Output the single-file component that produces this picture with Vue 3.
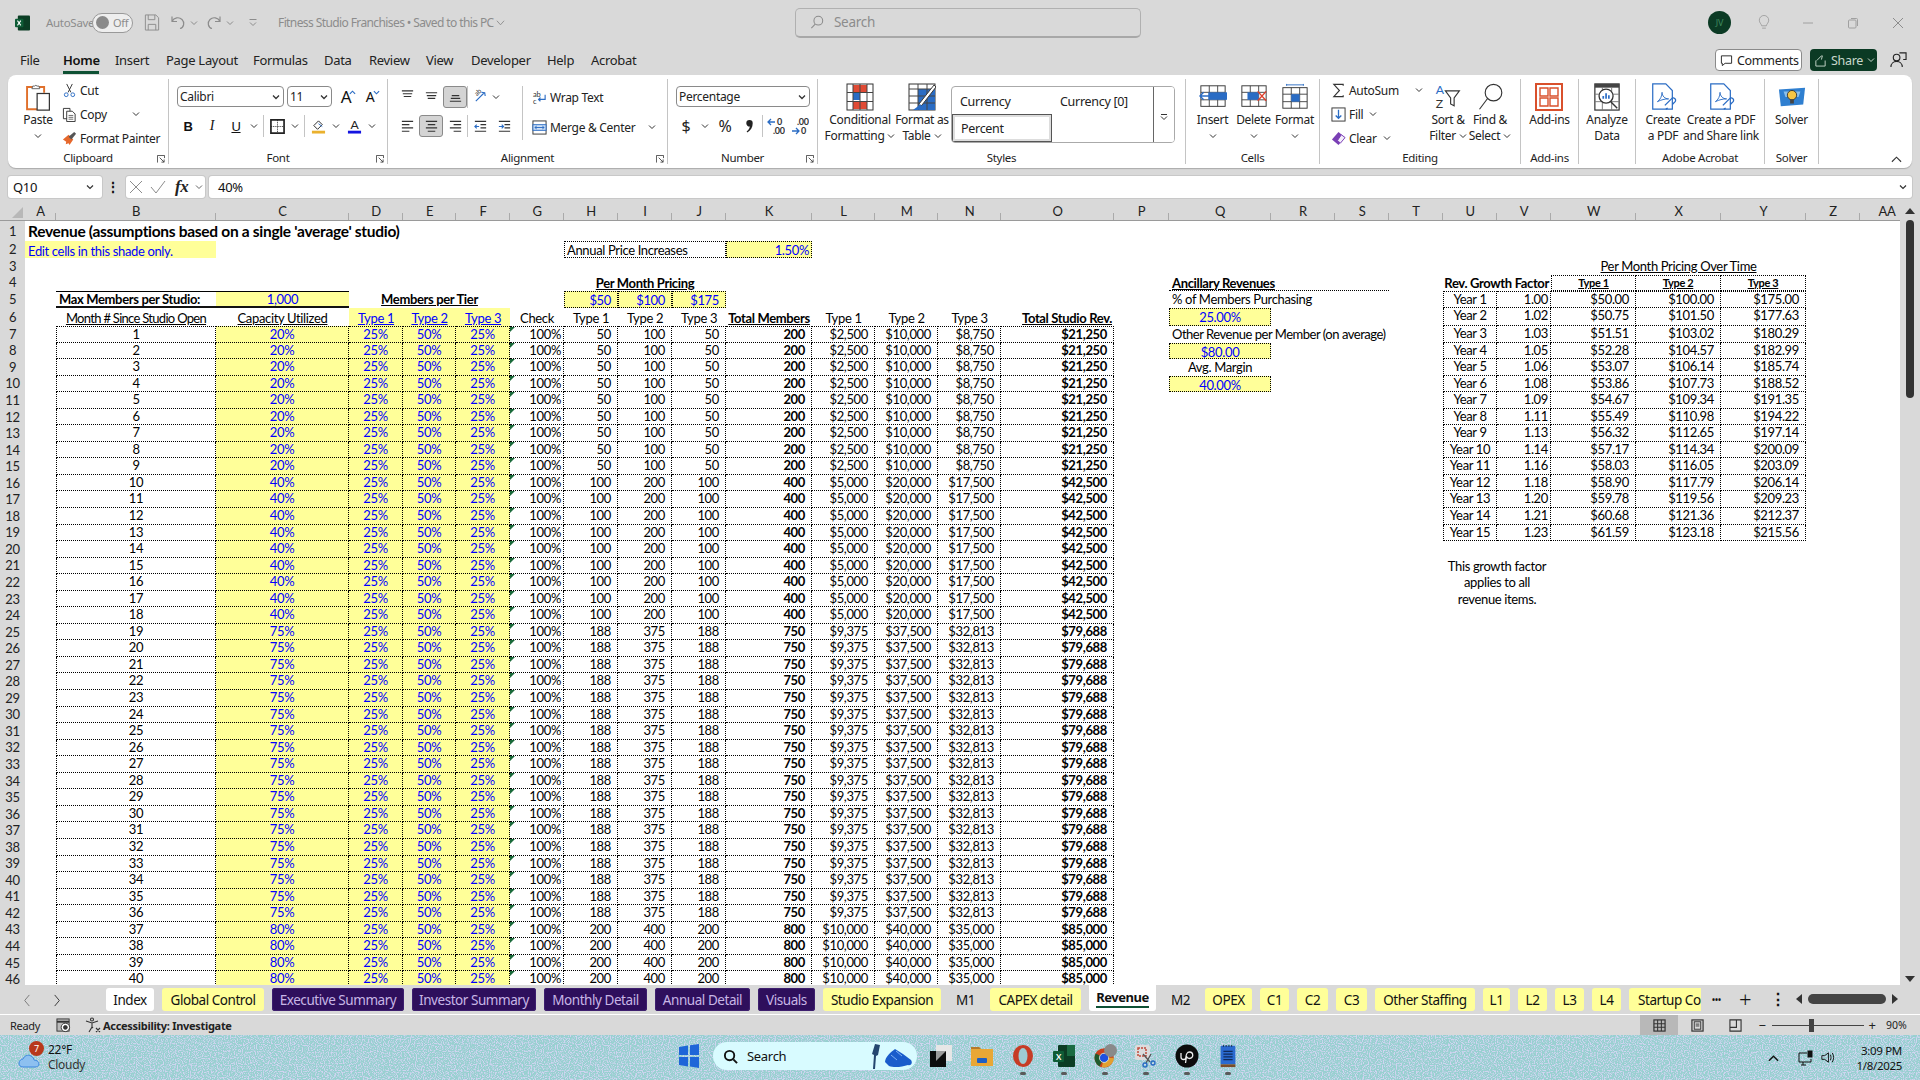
<script setup>
// columnas de la hoja: letra y ancho en px
const colWidths = {
  A: 31, B: 160, C: 133, D: 54, E: 53, F: 54, G: 54, H: 54, I: 54, J: 54, K: 86, L: 63, M: 63, N: 63,
  O: 113, P: 55, Q: 102, R: 64, S: 54, T: 54, U: 54, V: 54, W: 85, X: 85, Y: 85, Z: 54, AA: 54,
};
const letters = Object.keys(colWidths);
const rowCount = 46;

const gridStyle = {
  gridTemplateColumns: "25px " + letters.map((l) => colWidths[l] + "px").join(" "),
  gridTemplateRows:
    "21px 20px 17px 16.5px 16.5px 17px 18px " + Array(40).fill("16.55px").join(" "),
};

const cells = [];
const add = (row, col, text, cls = "", span = 1) => {
  cells.push({
    key: col + row,
    text,
    cls,
    pos: {
      gridRow: row + 1,
      gridColumn: letters.indexOf(col) + 2 + " / span " + span,
    },
  });
};

const fmt = (n) => n.toLocaleString("en-US");

// cabecera
add(1, "A", "Revenue (assumptions based on a single 'average' studio)", "title", 12);
add(2, "A", "Edit cells in this shade only.", "yel blue pl3 pt1", 2);
add(2, "H", "Annual Price Increases", "box l", 3);
add(2, "K", "1.50%", "box yel blue r3");
add(4, "H", "Per Month Pricing", "bold ul ctr", 3);
add(5, "B", "Max Members per Studio:", "bold mm l pl3");
add(5, "C", "1,000", "yel blue ctr mm");
add(5, "D", "Members per Tier", "bold ul ctr", 3);
["$50", "$100", "$175"].forEach((t, i) => add(5, "HIJ"[i], t, "box yel blue r"));

add(6, "B", "Month # Since Studio Open", "ul ctr pt1 tight");
add(6, "C", "Capacity Utilized", "ul ctr pt1");
["D", "E", "F"].forEach((c, i) => add(6, c, "Type " + (i + 1), "yel blue ul ctr pt1"));
add(6, "G", "Check", "ctr pt1");
["H", "I", "J"].forEach((c, i) => add(6, c, "Type " + (i + 1), "ctr pt1"));
add(6, "K", "Total Members", "bold ul ctr pt1");
["L", "M", "N"].forEach((c, i) => add(6, c, "Type " + (i + 1), "ctr pt1"));
add(6, "O", "Total Studio Rev.", "bold ul r3 pt1");

// filas de datos: mes 1 en la fila 7
const capacity = (m) => (m <= 9 ? 20 : m <= 18 ? 40 : m <= 36 ? 75 : 80);
for (let m = 1; m <= 40; m++) {
  const r = m + 6;
  const cap = capacity(m);
  const total = cap * 10;
  const t1 = Math.round(total * 0.25);
  const t2 = total * 0.5;
  const top = r === 7 ? " bt" : "";
  add(r, "B", m, "b bl ctr" + top);
  add(r, "C", cap + "%", "b yel blue ctr" + top);
  add(r, "D", "25%", "b yel blue ctr" + top);
  add(r, "E", "50%", "b yel blue ctr" + top);
  add(r, "F", "25%", "b yel blue ctr" + top);
  add(r, "G", "100%", "b r3 tri" + top);
  add(r, "H", t1, "b r" + top);
  add(r, "I", t2, "b r" + top);
  add(r, "J", t1, "b r" + top);
  add(r, "K", total, "b r bold" + top);
  add(r, "L", "$" + fmt(total * 12.5), "b r" + top);
  add(r, "M", "$" + fmt(total * 50), "b r" + top);
  add(r, "N", "$" + fmt(Math.round(total * 43.75)), "b r" + top);
  add(r, "O", "$" + fmt(Math.round(total * 106.25)), "b r bold" + top);
}

// ingresos auxiliares
add(4, "Q", "Ancillary Revenues", "bold ul l pl3 dotb", 3);
add(5, "Q", "% of Members Purchasing", "l pl3", 3);
add(6, "Q", "25.00%", "box yel blue ctr");
add(7, "Q", "Other Revenue per Member (on average)", "l pl3 tight2", 3);
add(8, "Q", "$80.00", "box yel blue ctr");
add(9, "Q", "Avg. Margin", "ctr");
add(10, "Q", "40.00%", "box yel blue ctr");

// tabla de precios por año
const factors = ["1.00", "1.02", "1.03", "1.05", "1.06", "1.08", "1.09", "1.11", "1.13", "1.14", "1.16", "1.18", "1.20", "1.21", "1.23"];
const type1 = ["50.00", "50.75", "51.51", "52.28", "53.07", "53.86", "54.67", "55.49", "56.32", "57.17", "58.03", "58.90", "59.78", "60.68", "61.59"];
const type2 = ["100.00", "101.50", "103.02", "104.57", "106.14", "107.73", "109.34", "110.98", "112.65", "114.34", "116.05", "117.79", "119.56", "121.36", "123.18"];
const type3 = ["175.00", "177.63", "180.29", "182.99", "185.74", "188.52", "191.35", "194.22", "197.14", "200.09", "203.09", "206.14", "209.23", "212.37", "215.56"];

add(3, "W", "Per Month Pricing Over Time", "ul ctr", 3);
add(4, "U", "Rev. Growth Factor", "bold r3", 2);
["W", "X", "Y"].forEach((c, i) => add(4, c, "Type " + (i + 1), "small bold ul ctr b bt" + (i === 0 ? " bl" : "")));
factors.forEach((f, i) => {
  const r = i + 5;
  const top = i === 0 ? " bt" : "";
  add(r, "U", "Year " + (i + 1), "b bl ctr" + top);
  add(r, "V", f, "b r2" + top);
  add(r, "W", "$" + type1[i], "b r" + top);
  add(r, "X", "$" + type2[i], "b r" + top);
  add(r, "Y", "$" + type3[i], "b r" + top);
});
add(21, "U", "This growth factor", "ctr", 2);
add(22, "U", "applies to all", "ctr", 2);
add(23, "U", "revenue items.", "ctr", 2);

const rowNumbers = Array.from({ length: rowCount }, (_, i) => i + 1);

const menus = [
  { t: "File", w: 43 },
  { t: "Home", w: 52, on: true },
  { t: "Insert", w: 51 },
  { t: "Page Layout", w: 87 },
  { t: "Formulas", w: 71 },
  { t: "Data", w: 45 },
  { t: "Review", w: 57 },
  { t: "View", w: 45 },
  { t: "Developer", w: 76 },
  { t: "Help", w: 44 },
  { t: "Acrobat", w: 50 },
];

const tabs = [
  { t: "Index", w: 48, k: "white" },
  { t: "Global Control", w: 102, k: "yellow" },
  { t: "Executive Summary", w: 132, k: "purple" },
  { t: "Investor Summary", w: 124, k: "purple" },
  { t: "Monthly Detail", w: 103, k: "purple" },
  { t: "Annual Detail", w: 95, k: "purple" },
  { t: "Visuals", w: 57, k: "purple" },
  { t: "Studio Expansion", w: 118, k: "yellow" },
  { t: "M1", w: 33, k: "plain" },
  { t: "CAPEX detail", w: 91, k: "yellow" },
  { t: "Revenue", w: 67, k: "active" },
  { t: "M2", w: 33, k: "plain" },
  { t: "OPEX", w: 47, k: "yellow" },
  { t: "C1", w: 29, k: "yellow" },
  { t: "C2", w: 31, k: "yellow" },
  { t: "C3", w: 31, k: "yellow" },
  { t: "Other Staffing", w: 100, k: "yellow" },
  { t: "L1", w: 27, k: "yellow" },
  { t: "L2", w: 29, k: "yellow" },
  { t: "L3", w: 29, k: "yellow" },
  { t: "L4", w: 29, k: "yellow" },
  { t: "Startup Co", w: 72, k: "yellow cut" },
];
</script>

<template>
  <div class="app">
    <!-- barra de título -->
    <div class="titlebar">
      <svg class="xl" viewBox="0 0 16 16"><rect x="3" width="13" height="16" rx="1" fill="#0b3d24"/><rect y="3.5" width="9" height="9" rx="1" fill="#0e5c36"/><path d="M2.6 5.5l3.6 5M6.2 5.5l-3.6 5" stroke="#fff" stroke-width="1.1"/></svg>
      <span class="autosave">AutoSave</span>
      <span class="toggle"><i></i>Off</span>
      <svg class="ti save" viewBox="0 0 16 18" fill="none" stroke="#8c8c8c"><path d="M1 1h11l3 3v13H1z"/><path d="M4 1v5h7V1M4 17v-6h8v6"/></svg>
      <svg class="ti undo" viewBox="0 0 16 16" fill="none" stroke="#8c8c8c" stroke-width="1.2"><path d="M2 2v5h5M2 7c2-4 7-5 10-2s2 8-2 9"/></svg>
      <svg class="tc" viewBox="0 0 8 8" fill="none" stroke="#8c8c8c"><path d="M1 2.5L4 5.5 7 2.5"/></svg>
      <svg class="ti redo" viewBox="0 0 16 16" fill="none" stroke="#8c8c8c" stroke-width="1.2"><path d="M14 2v5H9M14 7c-2-4-7-5-10-2s-2 8 2 9"/></svg>
      <svg class="tc" viewBox="0 0 8 8" fill="none" stroke="#8c8c8c"><path d="M1 2.5L4 5.5 7 2.5"/></svg>
      <svg class="tq" viewBox="0 0 10 10" fill="none" stroke="#8c8c8c"><path d="M1.5 1.5h7M2 4.5L5 7.5 8 4.5"/></svg>
      <span class="doc">Fitness Studio Franchises • Saved to this PC</span>
      <svg class="tc doc-ch" viewBox="0 0 10 8" fill="none" stroke="#8c8c8c"><path d="M1 1.5L5 6 9 1.5"/></svg>
      <div class="search">
        <svg viewBox="0 0 16 16" fill="none" stroke="#8c8c8c" stroke-width="1.2"><circle cx="9.5" cy="6.5" r="5"/><path d="M6 10.5L1.5 15"/></svg>
        <span>Search</span>
      </div>
      <span class="avatar">JV</span>
      <svg class="win bulb" viewBox="0 0 12 16" fill="none" stroke="#a0a0a0"><path d="M3.5 11.5C3 9 1 8.5 1 5.5a5 5 0 0 1 10 0c0 3-2 3.5-2.5 6zM4 14h4"/></svg>
      <svg class="win minw" viewBox="0 0 12 12" stroke="#a0a0a0"><path d="M1 6h10"/></svg>
      <svg class="win maxw" viewBox="0 0 12 12" fill="none" stroke="#a0a0a0"><rect x="1.5" y="3" width="7.5" height="8" rx="1"/><path d="M4 1.5h5.5a1 1 0 0 1 1 1V9"/></svg>
      <svg class="win closew" viewBox="0 0 12 12" stroke="#8c8c8c"><path d="M1 1l10 10M11 1L1 11"/></svg>
    </div>

    <!-- pestañas de menú -->
    <div class="menubar">
      <span v-for="m in menus" :key="m.t" class="menu" :class="{ on: m.on }" :style="{ width: m.w + 'px' }">{{ m.t }}</span>
      <span class="comments">
        <svg viewBox="0 0 14 14" fill="none" stroke="#222"><path d="M1.5 2h11v8h-7l-3 2.5V10h-1z"/></svg>
        Comments
      </span>
      <span class="share">
        <svg viewBox="0 0 14 14" fill="none" stroke="#c8d8cc"><path d="M2 7v6h10V7M3 7l5-5h1l-1 4"/></svg>
        Share
        <svg class="sch" viewBox="0 0 8 8" fill="none" stroke="#c8d8cc"><path d="M1 2.5L4 5.5 7 2.5"/></svg>
      </span>
      <svg class="presenter" viewBox="0 0 18 18" fill="none" stroke="#222" stroke-width="1.2"><circle cx="7" cy="7" r="3.5"/><path d="M1 17c0-4 3-6 6-6s6 2 6 6M10 2h7v7h-3"/></svg>
    </div>

    <!-- cinta -->
    <div class="ribbon">
      <div class="grp" style="width: 161px">
        <div class="body">
          <div class="big paste">
            <svg viewBox="0 0 30 32" class="bi"><path d="M14 30H2.5V4.5H22V11" fill="none" stroke="#e0702c" stroke-width="2.2"/><path d="M8 6.5l1-3h2a2 2 0 0 1 3 0h2l1 3z" fill="#fff" stroke="#555"/><rect x="14" y="12" width="14" height="19" fill="#fff" stroke="#333" stroke-width="1.4"/></svg>
            <span>Paste</span>
            <svg class="bch" viewBox="0 0 8 8" fill="none" stroke="#333"><path d="M1 2.5L4 5.5 7 2.5"/></svg>
          </div>
          <div class="stack">
            <div class="sr">
              <svg class="si" viewBox="0 0 16 16" fill="none" stroke="#333"><path d="M5 1l4.5 9M11 1L6.5 10"/><circle cx="4.5" cy="12.5" r="2" stroke="#2a6cc4"/><circle cx="11.5" cy="12.5" r="2" stroke="#2a6cc4"/></svg>
              Cut
            </div>
            <div class="sr">
              <svg class="si" viewBox="0 0 16 16" fill="none" stroke="#333"><path d="M1.5 1.5h7v11h-7z"/><path d="M5 4.5h6l3 3v8H5z" fill="#fff"/><path d="M7 9h5M7 11h5M7 13h5" stroke="#666"/></svg>
              Copy
              <svg class="ch copych" viewBox="0 0 8 8" fill="none" stroke="#333"><path d="M1 2.5L4 5.5 7 2.5"/></svg>
            </div>
            <div class="sr">
              <svg class="si" viewBox="0 0 16 16"><path d="M1 9l6-5 5 5-4 6-1-2-3 1 .5-2.5z" fill="#e6682c"/><path d="M7 6l6-5 2 2-5 6z" fill="#555"/></svg>
              Format Painter
            </div>
          </div>
        </div>
        <div class="lbl">Clipboard<svg class="launch" viewBox="0 0 9 9" fill="none" stroke="#444"><path d="M.5 8.5v-8h8v3M3 3l5 5M8 5v3H5"/></svg></div>
      </div>

      <div class="grp" style="width: 219px">
        <div class="body col pad8">
          <div class="tr">
            <span class="combo" style="width: 107px">Calibri<svg class="ch" viewBox="0 0 8 8" fill="none" stroke="#333" stroke-width="1.3"><path d="M1 2.5L4 5.5 7 2.5"/></svg></span>
            <span class="combo" style="width: 45px; margin-left: 3px">11<svg class="ch" viewBox="0 0 8 8" fill="none" stroke="#333" stroke-width="1.3"><path d="M1 2.5L4 5.5 7 2.5"/></svg></span>
            <span class="ib glyph" style="margin-left: 2px"><b class="fa big-a">A</b><svg class="sup" viewBox="0 0 8 8" fill="none" stroke="#2a6cc4" stroke-width="1.3"><path d="M1 5.5L4 2.5 7 5.5"/></svg></span>
            <span class="ib glyph"><b class="fa small-a">A</b><svg class="sup" viewBox="0 0 8 8" fill="none" stroke="#2a6cc4" stroke-width="1.3"><path d="M1 2.5L4 5.5 7 2.5"/></svg></span>
          </div>
          <div class="tr r2row">
            <span class="ib bold-i">B</span>
            <span class="ib ital-i">I</span>
            <span class="ib ul-i">U</span>
            <span class="chb"><svg class="ch" viewBox="0 0 8 8" fill="none" stroke="#333"><path d="M1 2.5L4 5.5 7 2.5"/></svg></span>
            <i class="vs"></i>
            <span class="ib"><svg class="si" viewBox="0 0 16 16" fill="none" stroke="#222"><path d="M1 1h14v14H1z" stroke-width="1.8"/><path d="M8 1v14M1 8h14" stroke-dasharray="1 1"/></svg></span>
            <span class="chb"><svg class="ch" viewBox="0 0 8 8" fill="none" stroke="#333"><path d="M1 2.5L4 5.5 7 2.5"/></svg></span>
            <i class="vs"></i>
            <span class="ib"><svg class="si" viewBox="0 0 16 16"><path d="M3 7l5-5 4 4-5 5z" fill="#fff" stroke="#222"/><path d="M8 5L12 8" stroke="#2a6cc4"/><rect x="1" y="12.5" width="14" height="3" fill="#eab12e"/></svg></span>
            <span class="chb"><svg class="ch" viewBox="0 0 8 8" fill="none" stroke="#333"><path d="M1 2.5L4 5.5 7 2.5"/></svg></span>
            <span class="ib"><svg class="si" viewBox="0 0 16 16"><text x="8" y="11" text-anchor="middle" font-size="13" font-family="Lato" fill="#222">A</text><rect x="1" y="12.5" width="14" height="3" fill="#1414e0"/></svg></span>
            <span class="chb"><svg class="ch" viewBox="0 0 8 8" fill="none" stroke="#333"><path d="M1 2.5L4 5.5 7 2.5"/></svg></span>
          </div>
        </div>
        <div class="lbl">Font<svg class="launch" viewBox="0 0 9 9" fill="none" stroke="#444"><path d="M.5 8.5v-8h8v3M3 3l5 5M8 5v3H5"/></svg></div>
      </div>

      <div class="grp" style="width: 280px">
        <div class="body alignbody">
          <div class="col alignleft">
            <div class="tr">
              <span class="ib"><svg class="si" viewBox="0 0 16 16" stroke="#333" stroke-width="1.2"><path d="M2 2h12M3 5h10M4 8h8"/></svg></span>
              <span class="ib"><svg class="si" viewBox="0 0 16 16" stroke="#333" stroke-width="1.2"><path d="M2 4h12M3 7h10M4 10h8"/></svg></span>
              <span class="ib sel"><svg class="si" viewBox="0 0 16 16" stroke="#333" stroke-width="1.2"><path d="M4 7h8M3 10h10M2 13h12"/></svg></span>
              <i class="vs0"></i>
              <span class="ib"><svg class="si" viewBox="0 0 16 16" fill="none"><path d="M3 13L12 4M9 3.5l3.5.5.5 3.5" stroke="#2a6cc4" stroke-width="1.2"/><text x="4" y="7" font-size="7" font-family="Lato" fill="#333" transform="rotate(-45 5 7)">ab</text></svg></span>
              <span class="chb" style="margin-left: -2px"><svg class="ch" viewBox="0 0 8 8" fill="none" stroke="#333"><path d="M1 2.5L4 5.5 7 2.5"/></svg></span>
            </div>
            <div class="tr r2row">
              <span class="ib"><svg class="si" viewBox="0 0 16 16" stroke="#333" stroke-width="1.2"><path d="M2 2.5h12M2 6h8M2 9.5h12M2 13h8"/></svg></span>
              <span class="ib sel"><svg class="si" viewBox="0 0 16 16" stroke="#333" stroke-width="1.2"><path d="M2 2.5h12M4 6h8M2 9.5h12M4 13h8"/></svg></span>
              <span class="ib"><svg class="si" viewBox="0 0 16 16" stroke="#333" stroke-width="1.2"><path d="M2 2.5h12M6 6h8M2 9.5h12M6 13h8"/></svg></span>
              <i class="vs0"></i>
              <span class="ib"><svg class="si" viewBox="0 0 16 16" fill="none" stroke="#333" stroke-width="1.2"><path d="M2 2.5h12M8 6h6M8 9.5h6M2 13h12"/><path d="M6.5 8H2M4 6L2 8l2 2" stroke="#2a6cc4"/></svg></span>
              <span class="ib"><svg class="si" viewBox="0 0 16 16" fill="none" stroke="#333" stroke-width="1.2"><path d="M2 2.5h12M8 6h6M8 9.5h6M2 13h12"/><path d="M2 8h4.5M5 6l2 2-2 2" stroke="#2a6cc4"/></svg></span>
            </div>
          </div>
          <i class="vsep"></i>
          <div class="col alignright">
            <div class="tr">
              <svg class="si" viewBox="0 0 16 16" fill="none"><text x="1" y="7" font-size="8" font-family="Lato" fill="#333">ab</text><text x="1" y="15" font-size="8" font-family="Lato" fill="#333">c</text><path d="M14 5v5H7M9 8l-2 2 2 2" stroke="#2a6cc4" stroke-width="1.2"/></svg>
              <span class="txt">Wrap Text</span>
            </div>
            <div class="tr r2row">
              <svg class="si" viewBox="0 0 16 16" fill="none" stroke="#333"><rect x="1" y="1" width="14" height="14"/><rect x="1" y="5" width="14" height="6" fill="#cfe0f5" stroke="#2a6cc4"/><path d="M3 8h10M5 6.5L3 8l2 1.5M11 6.5L13 8l-2 1.5" stroke="#2a6cc4"/></svg>
              <span class="txt">Merge &amp; Center</span>
              <svg class="ch mc" viewBox="0 0 8 8" fill="none" stroke="#333"><path d="M1 2.5L4 5.5 7 2.5"/></svg>
            </div>
          </div>
        </div>
        <div class="lbl">Alignment<svg class="launch" viewBox="0 0 9 9" fill="none" stroke="#444"><path d="M.5 8.5v-8h8v3M3 3l5 5M8 5v3H5"/></svg></div>
      </div>

      <div class="grp" style="width: 150px">
        <div class="body col pad8">
          <div class="tr">
            <span class="combo" style="width: 134px">Percentage<svg class="ch" viewBox="0 0 8 8" fill="none" stroke="#333" stroke-width="1.3"><path d="M1 2.5L4 5.5 7 2.5"/></svg></span>
          </div>
          <div class="tr r2row numrow">
            <span class="ib numg">$</span>
            <span class="chb" style="margin-left: 1px"><svg class="ch" viewBox="0 0 8 8" fill="none" stroke="#333"><path d="M1 2.5L4 5.5 7 2.5"/></svg></span>
            <span class="ib numg" style="margin-left: 2px">%</span>
            <span class="ib"><svg class="si" viewBox="0 0 10 14" fill="#222"><path d="M2 4a3 3 0 1 1 6 0c0 4-2 7-5 8.5l-.7-1c1.7-1 2.7-2.5 3-4.5A3 3 0 0 1 2 4z"/></svg></span>
            <i class="vs0" style="margin: 0 1px"></i>
            <span class="ib"><svg class="si dec" viewBox="0 0 18 18" fill="none"><text x="10" y="8" font-size="9" font-family="Lato" font-weight="700" fill="#333">0</text><text x="6" y="17" font-size="9" font-family="Lato" font-weight="700" fill="#333">.00</text><path d="M8 5H1M4 2L1 5l3 3" stroke="#2a6cc4" stroke-width="1.3"/></svg></span>
            <span class="ib"><svg class="si dec" viewBox="0 0 18 18" fill="none"><text x="6" y="8" font-size="9" font-family="Lato" font-weight="700" fill="#333">.00</text><text x="10" y="17" font-size="9" font-family="Lato" font-weight="700" fill="#333">0</text><path d="M1 14h7M5 11l3 3-3 3" stroke="#2a6cc4" stroke-width="1.3"/></svg></span>
          </div>
        </div>
        <div class="lbl">Number<svg class="launch" viewBox="0 0 9 9" fill="none" stroke="#444"><path d="M.5 8.5v-8h8v3M3 3l5 5M8 5v3H5"/></svg></div>
      </div>

      <div class="grp" style="width: 368px">
        <div class="body stylesbody">
          <div class="big" style="width: 74px">
            <svg viewBox="0 0 28 28" class="bi"><rect x="1" y="1" width="26" height="26" fill="#fff" stroke="#333"/><rect x="7" y="2" width="14" height="7" fill="#e04a34"/><rect x="7" y="10" width="7" height="7" fill="#2a6cc4"/><rect x="7" y="19" width="14" height="7" fill="#e04a34"/><path d="M1 9.5h26M1 18.5h26M7 1v26M14 1v26M21 1v26" stroke="#444" fill="none"/></svg>
            <span>Conditional</span>
            <span>Formatting<svg class="inl" viewBox="0 0 8 8" fill="none" stroke="#333"><path d="M1 2.5L4 5.5 7 2.5"/></svg></span>
          </div>
          <div class="big" style="width: 50px">
            <svg viewBox="0 0 28 28" class="bi"><rect x="1" y="1" width="26" height="26" fill="#fff" stroke="#333"/><rect x="10" y="6" width="17" height="21" fill="#2a6cc4"/><path d="M1 6h26M1 13h26M1 20h26M10 1v26M19 1v26" stroke="#444" fill="none"/><path d="M26 2l2 2L14 22l-4 4 1-5z" fill="#fff" stroke="#3a3a3a"/><path d="M9 24l3-3 2 2-4 4H5z" fill="#2a6cc4"/></svg>
            <span>Format as</span>
            <span>Table<svg class="inl" viewBox="0 0 8 8" fill="none" stroke="#333"><path d="M1 2.5L4 5.5 7 2.5"/></svg></span>
          </div>
          <div class="gallery">
            <span class="gc top">Currency</span>
            <span class="gc top">Currency [0]</span>
            <span class="gc gsel">Percent</span>
            <span class="gbtn"><svg viewBox="0 0 8 8" fill="none" stroke="#333"><path d="M1 1.5h6M1 3.5L4 6.5 7 3.5"/></svg></span>
          </div>
        </div>
        <div class="lbl">Styles</div>
      </div>

      <div class="grp" style="width: 134px">
        <div class="body cellsbody">
          <div class="big w41">
            <svg viewBox="0 0 30 28" class="bi"><rect x="2" y="2" width="26" height="22" fill="#fff" stroke="#333"/><path d="M2 9h26M2 17h26M11 2v22M20 2v22" stroke="#444"/><rect x="10" y="9" width="20" height="8" fill="#2a6cc4"/><path d="M12 13H1M5 9l-4 4 4 4" fill="none" stroke="#2a6cc4" stroke-width="1.5"/></svg>
            <span>Insert</span>
            <svg class="bch" viewBox="0 0 8 8" fill="none" stroke="#333"><path d="M1 2.5L4 5.5 7 2.5"/></svg>
          </div>
          <div class="big w41">
            <svg viewBox="0 0 30 28" class="bi"><rect x="2" y="2" width="26" height="22" fill="#fff" stroke="#333"/><path d="M2 9h26M2 17h26M11 2v22M20 2v22" stroke="#444"/><rect x="8" y="9" width="12" height="8" fill="#2a6cc4"/><path d="M19 8l9 10M28 8l-9 10" fill="none" stroke="#e0402c" stroke-width="1.5"/></svg>
            <span>Delete</span>
            <svg class="bch" viewBox="0 0 8 8" fill="none" stroke="#333"><path d="M1 2.5L4 5.5 7 2.5"/></svg>
          </div>
          <div class="big w41">
            <svg viewBox="0 0 30 28" class="bi"><rect x="2" y="4" width="26" height="22" fill="#fff" stroke="#333"/><path d="M2 11h26M2 19h26M11 4v22M20 4v22" stroke="#444"/><rect x="11" y="11" width="9" height="8" fill="#2a6cc4"/><path d="M6 1h18M6 0v2M24 0v2" stroke="#2a6cc4"/></svg>
            <span>Format</span>
            <svg class="bch" viewBox="0 0 8 8" fill="none" stroke="#333"><path d="M1 2.5L4 5.5 7 2.5"/></svg>
          </div>
        </div>
        <div class="lbl">Cells</div>
      </div>

      <div class="grp" style="width: 201px">
        <div class="body editbody">
          <div class="stack editstack">
            <div class="sr">
              <svg class="si" viewBox="0 0 16 16" fill="none" stroke="#333" stroke-width="1.2"><path d="M13 3V1.5H3L9 8l-6 6.5h10V13"/></svg>
              AutoSum
              <svg class="ch sumch" viewBox="0 0 8 8" fill="none" stroke="#333"><path d="M1 2.5L4 5.5 7 2.5"/></svg>
            </div>
            <div class="sr">
              <svg class="si" viewBox="0 0 16 16" fill="none" stroke="#333"><rect x="1" y="1" width="14" height="14"/><path d="M8 3v9M5 9l3 3 3-3" stroke="#2a6cc4" stroke-width="1.4"/></svg>
              Fill<svg class="inl" viewBox="0 0 8 8" fill="none" stroke="#333"><path d="M1 2.5L4 5.5 7 2.5"/></svg>
            </div>
            <div class="sr">
              <svg class="si" viewBox="0 0 16 16"><path d="M8 1l7 6-7 8-7-6z" fill="#7a3fb5"/><path d="M11 4l4 3-5 6-3-3z" fill="#f4eefb" stroke="#7a3fb5"/></svg>
              Clear<svg class="inl" viewBox="0 0 8 8" fill="none" stroke="#333"><path d="M1 2.5L4 5.5 7 2.5"/></svg>
            </div>
          </div>
          <div class="big" style="width: 44px">
            <svg viewBox="0 0 30 32" class="bi"><text x="1" y="13" font-size="14" font-family="Lato" fill="#2a6cc4">A</text><text x="1" y="29" font-size="14" font-family="Lato" fill="#333">Z</text><path d="M12 9h16l-6 8v9l-4-2v-7z" fill="#fff" stroke="#333" stroke-width="1.3"/></svg>
            <span>Sort &amp;</span>
            <span>Filter<svg class="inl" viewBox="0 0 8 8" fill="none" stroke="#333"><path d="M1 2.5L4 5.5 7 2.5"/></svg></span>
          </div>
          <div class="big" style="width: 40px">
            <svg viewBox="0 0 30 32" class="bi"><circle cx="19" cy="11" r="9.5" fill="none" stroke="#333" stroke-width="1.3"/><path d="M12 18L3 30" stroke="#333" stroke-width="1.3"/></svg>
            <span>Find &amp;</span>
            <span>Select<svg class="inl" viewBox="0 0 8 8" fill="none" stroke="#333"><path d="M1 2.5L4 5.5 7 2.5"/></svg></span>
          </div>
        </div>
        <div class="lbl">Editing</div>
      </div>

      <div class="grp" style="width: 58px">
        <div class="body center">
          <div class="big">
            <svg viewBox="0 0 28 28" class="bi"><rect x="1" y="1" width="26" height="26" fill="#fff" stroke="#d9502c" stroke-width="2"/><path d="M5 5h8v8H5zM15 5h8v8h-8zM5 15h8v8H5zM15 15h8v8h-8z" fill="none" stroke="#d9502c" stroke-width="1.4"/></svg>
            <span>Add-ins</span>
          </div>
        </div>
        <div class="lbl">Add-ins</div>
      </div>

      <div class="grp" style="width: 57px">
        <div class="body center">
          <div class="big">
            <svg viewBox="0 0 28 30" class="bi"><rect x="1" y="1" width="26" height="28" fill="#fff" stroke="#333" stroke-width="1.3"/><rect x="1" y="1" width="26" height="4" fill="#444"/><path d="M1 12h26M1 20h26M9 5v24M19 5v24" stroke="#777"/><circle cx="13" cy="14" r="7.5" fill="#fff" stroke="#333" stroke-width="1.4"/><path d="M10 17v-3M13 17v-6M16 17v-4" stroke="#2a6cc4" stroke-width="1.8"/><path d="M18 20l7 7" stroke="#333" stroke-width="1.5"/></svg>
            <span>Analyze</span>
            <span>Data</span>
          </div>
        </div>
        <div class="lbl">&nbsp;</div>
      </div>

      <div class="grp" style="width: 129px">
        <div class="body adobebody">
          <div class="big" style="width: 50px">
            <svg viewBox="0 0 28 30" class="bi"><path d="M3 1h14l7 7v20H3z" fill="#fff" stroke="#2a6cc4" stroke-width="1.3"/><path d="M8 20c3-2 5-6 5-10 0 4 3 7 7 7-4 0-8 1-12 3z" fill="none" stroke="#2a6cc4"/><path d="M16 24l7-7a2.5 2.5 0 0 1 4 3l-3 3M19 27l-2 1" fill="none" stroke="#2a6cc4" stroke-width="1.4"/></svg>
            <span>Create</span>
            <span>a PDF</span>
          </div>
          <div class="big" style="width: 66px">
            <svg viewBox="0 0 28 30" class="bi"><path d="M3 1h14l7 7v20H3z" fill="#fff" stroke="#2a6cc4" stroke-width="1.3"/><path d="M8 20c3-2 5-6 5-10 0 4 3 7 7 7-4 0-8 1-12 3z" fill="none" stroke="#2a6cc4"/><path d="M16 24l7-7a2.5 2.5 0 0 1 4 3l-3 3M19 27l-2 1" fill="none" stroke="#2a6cc4" stroke-width="1.4"/></svg>
            <span>Create a PDF</span>
            <span>and Share link</span>
          </div>
        </div>
        <div class="lbl">Adobe Acrobat</div>
      </div>

      <div class="grp" style="width: 54px">
        <div class="body center">
          <div class="big">
            <svg viewBox="0 0 30 28" class="bi"><path d="M1 6l28-2-2 18-24 2z" fill="#2f7fd0"/><path d="M6 8h18l-2 6H8z" fill="#8cc0ea"/><circle cx="15" cy="12" r="5" fill="#f6c544" stroke="#333"/><path d="M13 17h4v4h-4z" fill="#444"/></svg>
            <span>Solver</span>
          </div>
        </div>
        <div class="lbl">Solver</div>
      </div>

      <svg class="collapse" viewBox="0 0 12 8" fill="none" stroke="#333" stroke-width="1.2"><path d="M1 7l5-5 5 5"/></svg>
    </div>

    <!-- barra de fórmulas -->
    <div class="formulabar">
      <span class="namebox">Q10<svg class="ch" viewBox="0 0 8 8" fill="none" stroke="#333" stroke-width="1.2"><path d="M1 2.5L4 5.5 7 2.5"/></svg></span>
      <span class="dots">⋮</span>
      <span class="fxbox">
        <svg class="fx-x" viewBox="0 0 14 14" stroke="#8c8c8c"><path d="M1 1l12 12M13 1L1 13"/></svg>
        <svg class="fx-ok" viewBox="0 0 16 14" stroke="#8c8c8c" fill="none"><path d="M1 7l5 6 9-12"/></svg>
        <em>fx</em>
        <svg class="ch fx-ch" viewBox="0 0 8 8" fill="none" stroke="#666"><path d="M1 2.5L4 5.5 7 2.5"/></svg>
      </span>
      <span class="formula">40%<svg class="ch" viewBox="0 0 8 8" fill="none" stroke="#333" stroke-width="1.2"><path d="M1 2.5L4 5.5 7 2.5"/></svg></span>
    </div>

    <!-- hoja -->
    <div class="sheetwrap">
      <div class="sheet" :style="gridStyle">
        <div class="corner"><i></i></div>
        <div v-for="l in letters" :key="l" class="colhead">{{ l }}</div>
        <div v-for="n in rowNumbers" :key="n" class="rowhead" :style="{ gridRow: n + 1 }">{{ n }}</div>
        <div v-for="c in cells" :key="c.key" class="c" :class="c.cls" :style="c.pos">{{ c.text }}</div>
      </div>
      <div class="vscroll">
        <i class="up"></i>
        <i class="thumb"></i>
        <i class="down"></i>
      </div>
    </div>

    <!-- pestañas de hojas -->
    <div class="tabbar">
      <span class="nav"><svg viewBox="0 0 8 14" fill="none" stroke="#777"><path d="M6.5 1L1.5 7l5 6"/></svg></span>
      <span class="nav"><svg viewBox="0 0 8 14" fill="none" stroke="#333"><path d="M1.5 1l5 6-5 6"/></svg></span>
      <div class="tabs">
        <span v-for="t in tabs" :key="t.t" class="tab" :class="t.k" :style="{ width: t.w + 'px' }"><b v-if="t.k === 'active'">{{ t.t }}</b><template v-else>{{ t.t }}</template></span>
      </div>
      <span class="more">•••</span>
      <span class="plus">+</span>
      <span class="kebab">⋮</span>
      <div class="hscroll"><i class="la"></i><i class="hthumb"></i><i class="ra"></i></div>
    </div>

    <!-- barra de estado -->
    <div class="statusbar">
      <span class="ready">Ready</span>
      <svg class="macro" viewBox="0 0 16 16" fill="none" stroke="#333"><rect x="1" y="1" width="13" height="13" fill="#bbb"/><path d="M1 4h13" stroke-width="2"/><circle cx="10" cy="10" r="4.5" fill="#fff"/><circle cx="10" cy="10" r="2" fill="#333"/></svg>
      <svg class="access" viewBox="0 0 16 16" fill="none" stroke="#333" stroke-width="1.1"><circle cx="7" cy="2.5" r="1.5"/><path d="M1 4l6 2 6-2M7 6v4l-3 5M7 10l1 1M11 11l4 4M15 11l-4 4"/></svg>
      <b class="inv">Accessibility: Investigate</b>
      <span class="view act"><svg viewBox="0 0 14 14" fill="none" stroke="#333"><rect x="1" y="1" width="12" height="12" stroke-width="1.3"/><path d="M5 1v12M9 1v12M1 5h12M1 9h12" stroke-width="1.1"/></svg></span>
      <span class="view"><svg viewBox="0 0 14 14" fill="none" stroke="#333"><rect x="1" y="1" width="12" height="12" stroke-width="1.3"/><rect x="3.5" y="3" width="7" height="8"/><path d="M5 5.5h4M5 7.5h4"/></svg></span>
      <span class="view"><svg viewBox="0 0 14 14" fill="none" stroke="#333"><path d="M1 1h12v12H1zM1 9h7V1" stroke-width="1.2"/></svg></span>
      <span class="zm">−</span>
      <span class="slider"><i></i></span>
      <span class="zm">+</span>
      <span class="pct">90%</span>
    </div>

    <!-- barra de tareas -->
    <div class="taskbar">
      <svg class="noise" width="1920" height="45"><filter id="spk" x="0" y="0" width="100%" height="100%"><feTurbulence type="fractalNoise" baseFrequency="0.85" numOctaves="1" seed="4"/><feColorMatrix values="0 0 0 0 0.63  0 0 0 0 0.66  0 0 0 0 0.88  0 0 0 6 -2.8"/></filter><rect width="1920" height="45" filter="url(#spk)"/></svg>
      <div class="weather">
        <span class="wicon">
          <svg viewBox="0 0 24 22"><path d="M5 20c-3 0-4-2-4-4s2-4 4-4c1-3 5-5 8-3 2 1 3 3 3 4 3 0 5 2 5 4s-2 3-4 3z" fill="#8dc0f0" stroke="#3a86e0"/></svg>
          <i>7</i>
        </span>
        <span class="wtext"><span>22°F</span><span class="cloudy">Cloudy</span></span>
      </div>
      <div class="apps">
        <svg class="ap" viewBox="0 0 24 24"><path d="M2 3l9-1.5V11H2zM13 1.2L22 0v11h-9zM2 13h9v9.5L2 21zM13 13h9v11l-9-1.5z" fill="#1e66d8"/></svg>
        <div class="tsearch">
          <svg viewBox="0 0 16 16" fill="none" stroke="#111" stroke-width="2"><circle cx="7" cy="7" r="5"/><path d="M11 11l4 4"/></svg>
          <span>Search</span>
          <svg class="deco" viewBox="0 0 44 28"><path d="M6 2l5 1-2 10-2 1-1 13H4l1-14-2-1z" fill="#24466f"/><path d="M16 20c0-5 6-10 10-13l8 5 8 6c2 3 0 6-3 5-6 2-14 3-19 1z" fill="#1a5ccb"/><path d="M22 13l6 5M27 9l6 5" stroke="#7fb0f2"/></svg>
        </div>
        <svg class="ap" viewBox="0 0 24 24"><rect x="7" y="1" width="16" height="16" fill="#e6e6e6"/><rect x="1" y="7" width="16" height="16" fill="#0c0c0c"/><path d="M7 17V7h10z" fill="#9a9a9a"/></svg>
        <svg class="ap" viewBox="0 0 24 24"><path d="M1 3h8l2 2h12v17H1z" fill="#e8a736"/><path d="M1 3h8l2 2H1z" fill="#b5792a"/><rect x="7" y="14" width="10" height="5" rx="1" fill="#1d5fc4"/></svg>
        <span class="run"><svg class="ap" viewBox="0 0 24 24"><ellipse cx="12" cy="12" rx="10" ry="11" fill="#c63c26"/><ellipse cx="12" cy="12" rx="4.5" ry="8" fill="#9ecbd4"/></svg></span>
        <span class="run"><svg class="ap" viewBox="0 0 24 24"><rect x="6" y="1" width="17" height="22" rx="1" fill="#0b3d24"/><rect x="15" y="1" width="8" height="11" fill="#1a6b42"/><rect x="1" y="7" width="11" height="11" rx="1" fill="#0e5c36"/><text x="6.5" y="15.5" text-anchor="middle" font-size="8" font-family="Lato" font-weight="700" fill="#fff">X</text></svg></span>
        <span class="run"><svg class="ap" viewBox="0 0 26 26"><circle cx="12" cy="15" r="10.5" fill="#c8421e"/><path d="M12 15h10.5a10.5 10.5 0 0 1-13 10z" fill="#e2a030"/><path d="M12 15l-5 9.3a10.5 10.5 0 0 1-4-14z" fill="#1f5c2e"/><circle cx="12" cy="15" r="5" fill="#1e50e0" stroke="#d8e4d0"/><circle cx="19" cy="7" r="7" fill="#8a8a8a"/></svg></span>
        <span class="run"><svg class="ap" viewBox="0 0 24 24" fill="none"><rect x="1" y="1" width="15" height="15" rx="2" fill="#dcdcdc"/><rect x="4" y="4" width="8" height="8" stroke="#c04a3a" stroke-width="1.5" stroke-dasharray="2 1"/><path d="M9 10l7 8M17 10l-5 9" stroke="#555" stroke-width="1.3"/><circle cx="19" cy="19" r="2" stroke="#2a6cc4" stroke-width="1.4"/><circle cx="11" cy="21" r="2" stroke="#2a6cc4" stroke-width="1.4"/></svg></span>
        <span class="run"><svg class="ap" viewBox="0 0 24 24"><circle cx="12" cy="12" r="11.5" fill="#0c0c0c"/><path d="M6 9v4a2.5 2.5 0 0 0 5 0c0-2 1-5 3.5-5a3 3 0 0 1 0 6.5c-1.500 0-2.500-1-3-2L10.5 19" fill="none" stroke="#eee" stroke-width="1.3"/></svg></span>
        <span class="run"><svg class="ap" viewBox="0 0 20 26"><rect x="2" y="2" width="16" height="20" rx="1" fill="#2a6ad0"/><path d="M5 1v2M8 1v2M11 1v2M14 1v2" stroke="#123"/><path d="M5 8h10M5 11h10M5 14h10M5 17h10" stroke="#0f2a5c" stroke-width="1.4"/><rect x="2" y="22" width="16" height="3" fill="#7a4d2a"/></svg></span>
      </div>
      <div class="tray">
        <svg class="trayic up" viewBox="0 0 12 8" fill="none" stroke="#111" stroke-width="1.5"><path d="M1 7l5-5 5 5"/></svg>
        <svg class="trayic net" viewBox="0 0 16 16" fill="none" stroke="#111"><path d="M9 3H1v9h12V9M5 12v3M3 15h5"/><rect x="10" y="1" width="4" height="6" fill="#111"/></svg>
        <svg class="trayic spk" viewBox="0 0 16 16" fill="none" stroke="#111"><path d="M2 6v4h3l4 3V3L5 6zM11 5c1 2 1 4 0 6M13 3c2 3 2 7 0 10"/></svg>
        <div class="clock"><span>3:09 PM</span><span>1/8/2025</span></div>
      </div>
    </div>
  </div>
</template>

<style>
body {
  margin: 0;
  background: #d9d9d9;
}
</style>

<style scoped>
.app {
  width: 1920px;
  height: 1080px;
  display: flex;
  flex-direction: column;
  overflow: hidden;
  background: #d9d9d9;
  color: #111;
  font-family: "Noto Sans", "Open Sans", sans-serif;
  font-size: 12px;
  letter-spacing: -0.3px;
}
svg {
  display: block;
  flex: none;
}

/* barra de título */
.titlebar {
  height: 50px;
  box-sizing: border-box;
  padding: 0 0 5px 15px;
  display: flex;
  align-items: center;
  color: #8c8c8c;
  flex: none;
}
.xl {
  width: 15px;
  height: 16px;
}
.autosave {
  margin-left: 16px;
  width: 46px;
  font-size: 11.5px;
}
.toggle {
  width: 41px;
  height: 20px;
  box-sizing: border-box;
  border: 1px solid #999;
  border-radius: 10px;
  display: flex;
  align-items: center;
  gap: 4px;
  padding-left: 3px;
  font-size: 11px;
  background: #eee;
}
.toggle i {
  width: 13px;
  height: 13px;
  border-radius: 50%;
  background: #8a8a8a;
}
.ti {
  width: 16px;
  height: 17px;
}
.save {
  margin-left: 11px;
}
.undo {
  margin-left: 10px;
}
.redo {
  margin-left: 8px;
}
.tc {
  width: 8px;
  height: 8px;
  margin-left: 4px;
}
.tq {
  width: 10px;
  height: 10px;
  margin-left: 14px;
}
.doc {
  margin-left: 20px;
  font-size: 12px;
  letter-spacing: -0.6px;
  width: 218px;
  white-space: nowrap;
}
.doc-ch {
  width: 9px;
  margin-left: 0;
}
.search {
  margin-left: 290px;
  width: 346px;
  height: 30px;
  box-sizing: border-box;
  border: 1px solid #b0b0b0;
  border-bottom: 2px solid #a8a8a8;
  border-radius: 5px;
  display: flex;
  align-items: center;
  padding-left: 14px;
  gap: 10px;
  font-size: 13.5px;
  color: #8c8c8c;
}
.search svg {
  width: 14px;
  height: 14px;
}
.avatar {
  margin-left: 567px;
  width: 23px;
  height: 23px;
  border-radius: 50%;
  background: #0b3a24;
  color: #3f8a5e;
  font-size: 9px;
  display: flex;
  align-items: center;
  justify-content: center;
}
.win {
  width: 12px;
  height: 12px;
}
.bulb {
  margin-left: 27px;
  height: 15px;
}
.minw {
  margin-left: 32px;
}
.maxw {
  margin-left: 33px;
}
.closew {
  margin-left: 33px;
}

/* menú */
.menubar {
  height: 25px;
  display: flex;
  align-items: flex-start;
  padding-left: 20px;
  flex: none;
  position: relative;
  font-size: 13px;
  color: #222;
}
.menu {
  box-sizing: border-box;
  line-height: 20px;
  white-space: nowrap;
  position: relative;
}
.menu.on {
  font-weight: 600;
  color: #111;
}
.menu.on::after {
  content: "";
  position: absolute;
  left: 0;
  top: 21px;
  width: 36px;
  height: 2.5px;
  background: #0e5134;
}
.comments {
  margin-left: auto;
  width: 87px;
  height: 22px;
  margin-top: -1px;
  box-sizing: border-box;
  background: #fff;
  border: 1px solid #8a8a8a;
  border-radius: 4px;
  display: flex;
  align-items: center;
  gap: 4px;
  padding-left: 4px;
  font-size: 12.5px;
  white-space: nowrap;
}
.comments svg {
  width: 13px;
  height: 13px;
}
.share {
  margin-left: 8px;
  width: 67px;
  height: 22px;
  margin-top: -1px;
  box-sizing: border-box;
  background: #0b3a24;
  border-radius: 4px;
  display: flex;
  align-items: center;
  gap: 4px;
  padding-left: 4px;
  color: #c8d8cc;
  font-size: 12.5px;
}
.share svg {
  width: 13px;
  height: 13px;
}
.share .sch {
  width: 8px;
  height: 8px;
}
.presenter {
  width: 17px;
  height: 17px;
  margin: 1px 13px 0 13px;
}

/* cinta */
.ribbon {
  height: 93px;
  margin: 0 8px;
  box-sizing: border-box;
  background: #fff;
  border-radius: 8px;
  box-shadow: 0 1px 1px #aaa;
  display: flex;
  flex: none;
  position: relative;
  padding-top: 4px;
}
.grp {
  height: 85px;
  box-sizing: border-box;
  border-right: 1px solid #c4c4c4;
  display: flex;
  flex-direction: column;
  flex: none;
  position: relative;
}
.body {
  height: 72px;
  display: flex;
  box-sizing: border-box;
}
.lbl {
  text-align: center;
  font-size: 11.5px;
  line-height: 13px;
  color: #222;
}
.launch {
  position: absolute;
  right: 3px;
  bottom: 1px;
  width: 8px;
  height: 8px;
}
.col {
  flex-direction: column;
}
.pad8 {
  padding: 7px 0 0 8px;
  display: flex;
}
.center {
  justify-content: center;
}
.big {
  display: flex;
  flex-direction: column;
  align-items: center;
  padding-top: 4px;
  font-size: 12px;
  line-height: 16px;
  white-space: nowrap;
  color: #222;
}
.bi {
  width: 28px;
  height: 28px;
  margin-bottom: 1px;
}
.bch {
  width: 8px;
  height: 8px;
  margin-top: 4px;
}
.paste {
  width: 48px;
  margin-left: 6px;
}
.inl {
  display: inline-block;
  width: 8px;
  height: 8px;
  margin-left: 3px;
  vertical-align: 0;
}
.stack {
  display: flex;
  flex-direction: column;
  margin-top: -1px;
}
.sr {
  height: 24px;
  display: flex;
  align-items: center;
  gap: 3px;
  white-space: nowrap;
  font-size: 12px;
  color: #222;
}
.si {
  width: 15px;
  height: 15px;
}
.si.dec {
  width: 18px;
  height: 18px;
}
.ch {
  width: 8px;
  height: 8px;
}
.copych {
  margin-left: 22px;
}
.tr {
  display: flex;
  align-items: center;
  height: 21px;
}
.r2row {
  margin-top: 8px;
  margin-left: -1px;
  height: 22px;
}
.combo {
  box-sizing: border-box;
  height: 21px;
  border: 1px solid #8a8a8a;
  border-radius: 4px;
  display: flex;
  align-items: center;
  justify-content: space-between;
  padding: 0 3px 0 2px;
  font-size: 12px;
  color: #222;
}
.ib {
  width: 24px;
  height: 21px;
  box-sizing: border-box;
  display: flex;
  align-items: center;
  justify-content: center;
  position: relative;
  flex: none;
}
.ib.sel {
  background: #d4d4d4;
  border: 1px solid #8a8a8a;
  border-radius: 3px;
  height: 22px;
}
.chb {
  width: 12px;
  display: flex;
  justify-content: center;
  flex: none;
}
.vs {
  width: 1px;
  height: 22px;
  background: #c4c4c4;
  margin: 0 1px 0 3px;
  flex: none;
}
.vs0 {
  width: 1px;
  height: 22px;
  background: #c4c4c4;
  flex: none;
}
.fa {
  font-family: "Noto Sans", sans-serif;
  font-weight: 400;
}
.big-a {
  font-size: 17px;
}
.small-a {
  font-size: 14px;
}
.sup {
  width: 7px;
  height: 7px;
  position: absolute;
  right: 2px;
  top: 3px;
}
.bold-i {
  font: 700 13px "Liberation Sans", sans-serif;
}
.ital-i {
  font: italic 400 14px "Liberation Serif", serif;
}
.ul-i {
  font: 400 13px "Liberation Sans", sans-serif;
  text-decoration: underline;
}
.alignbody {
  display: flex;
  padding: 7px 0 0 7px;
}
.alignleft {
  display: flex;
  width: 127px;
  flex: none;
}
.alignleft .r2row {
  margin-left: 0;
}
.vsep {
  width: 1px;
  height: 54px;
  background: #c4c4c4;
  flex: none;
}
.alignright {
  display: flex;
  padding: 1px 0 0 9px;
}
.alignright .r2row {
  margin-left: 0;
}
.alignright .tr {
  gap: 3px;
}
.txt {
  font-size: 12px;
  white-space: nowrap;
  color: #222;
}
.mc {
  margin-left: 10px;
}
.numrow {
  margin-left: -2px;
}
.numg {
  font-size: 16px;
  color: #222;
}
.stylesbody {
  padding-left: 5px;
}
.gallery {
  margin: 7px 0 0 4px;
  width: 224px;
  height: 57px;
  box-sizing: border-box;
  border: 1px solid #aaa;
  border-radius: 4px;
  display: grid;
  grid-template-columns: 100px 101px 1fr;
  grid-template-rows: 1fr 28px;
  position: relative;
  overflow: hidden;
  font-size: 12.5px;
  color: #222;
}
.gc {
  display: flex;
  align-items: center;
  padding-left: 8px;
}
.gc.top {
  padding-top: 2px;
}
.gsel {
  grid-row: 2;
  grid-column: 1;
  box-sizing: border-box;
  border: 1px solid #555;
  box-shadow: inset 0 0 0 2px #ddd;
}
.gbtn {
  grid-row: 1 / 3;
  grid-column: 3;
  border-left: 1px solid #666;
  background: #fff;
  display: flex;
  justify-content: center;
  padding-top: 26px;
}
.gbtn svg {
  width: 8px;
  height: 8px;
}
.cellsbody {
  padding-left: 6px;
}
.w41 {
  width: 41px;
}
.editbody {
  padding-left: 11px;
}
.editstack {
  width: 95px;
}
.sumch {
  margin-left: 13px;
}
.adobebody {
  padding-left: 2px;
}
.collapse {
  position: absolute;
  right: 10px;
  bottom: 5px;
  width: 11px;
  height: 8px;
}

/* barra de fórmulas */
.formulabar {
  height: 22px;
  margin: 8px 8px 0;
  display: flex;
  gap: 4px;
  flex: none;
}
.namebox {
  width: 94px;
  box-sizing: border-box;
  background: #fff;
  border-radius: 3px;
  box-shadow: 0 0 0 1px #c8c8c8;
  display: flex;
  align-items: center;
  justify-content: space-between;
  padding: 0 8px 0 5px;
  font-size: 13px;
}
.dots {
  width: 16px;
  box-sizing: border-box;
  padding-right: 4px;
  text-align: center;
  font-size: 14px;
  line-height: 22px;
  font-weight: 700;
}
.fxbox {
  width: 79px;
  box-sizing: border-box;
  background: #fff;
  border-radius: 3px;
  box-shadow: 0 0 0 1px #c8c8c8;
  display: flex;
  align-items: center;
  padding-left: 3px;
}
.fx-x {
  width: 14px;
  height: 14px;
}
.fx-ok {
  width: 16px;
  height: 14px;
  margin-left: 7px;
}
.fxbox em {
  font: italic 700 17px "Liberation Serif", serif;
  color: #222;
  margin-left: 9px;
}
.fx-ch {
  margin-left: 6px;
}
.formula {
  flex: 1;
  box-sizing: border-box;
  background: #fff;
  border-radius: 3px;
  box-shadow: 0 0 0 1px #c8c8c8;
  display: flex;
  align-items: center;
  justify-content: space-between;
  padding: 0 5px 0 9px;
  font-size: 13px;
}

/* hoja */
.sheetwrap {
  margin-top: 2px;
  height: 785px;
  display: flex;
  flex: none;
  overflow: hidden;
  background: #fff;
}
.sheet {
  flex: 1;
  min-width: 0;
  display: grid;
  overflow: hidden;
  align-content: start;
  justify-content: start;
  font-family: Lato, sans-serif;
  font-size: 13px;
  letter-spacing: -0.35px;
  color: #000;
}
.corner {
  grid-row: 1;
  grid-column: 1;
  background: #d9d9d9;
  border-bottom: 1px solid #9a9a9a;
  position: relative;
}
.corner i {
  position: absolute;
  right: 2px;
  bottom: 2px;
  border-left: 11px solid transparent;
  border-bottom: 11px solid #b8b8b8;
}
.colhead {
  grid-row: 1;
  background: #d9d9d9;
  border-bottom: 1px solid #9a9a9a;
  text-align: center;
  line-height: 22px;
  color: #222;
  position: relative;
}
.colhead::after {
  content: "";
  position: absolute;
  right: 0;
  bottom: 0;
  height: 7px;
  width: 1px;
  background: #aaa;
}
.rowhead {
  grid-column: 1;
  background: #d9d9d9;
  display: flex;
  align-items: center;
  justify-content: center;
  color: #222;
  line-height: 15px;
}
.c {
  white-space: nowrap;
  line-height: 16px;
  box-sizing: border-box;
  position: relative;
}
.title {
  font-weight: 700;
  font-size: 15.5px;
  letter-spacing: -0.3px;
  line-height: 21px;
  padding-left: 3px;
}
.yel {
  background: #ffff99;
}
.blue {
  color: #0000ff;
}
.bold {
  font-weight: 700;
}
.ul {
  text-decoration: underline;
}
.ctr {
  text-align: center;
}
.l {
  text-align: left;
  padding-left: 2px;
}
.pl3 {
  padding-left: 3px;
}
.pt1 {
  padding-top: 1.5px;
}
.tight {
  letter-spacing: -0.7px;
}
.tight2 {
  letter-spacing: -0.48px;
}
.r {
  text-align: right;
  padding-right: 6px;
}
.r3 {
  text-align: right;
  padding-right: 2px;
}
.r2 {
  text-align: right;
  padding-right: 2px;
}
.small {
  font-size: 11px;
}
.box {
  border: 1px dotted #000;
}
.b {
  border-right: 1px dotted #000;
  border-bottom: 1px dotted #000;
  line-height: 14px;
}
.bt {
  border-top: 1px dotted #000;
}
.bl {
  border-left: 1px dotted #000;
}
.dotb {
  border-bottom: 1px dotted #000;
}
.mm {
  border-top: 1px solid #000;
  border-bottom: 2px solid #111;
  line-height: 14px;
}
.tri::before {
  content: "";
  position: absolute;
  left: 0;
  top: 0;
  border-top: 5px solid #1a6a3a;
  border-right: 5px solid transparent;
}
.vscroll {
  width: 20px;
  background: #d9d9d9;
  flex: none;
  position: relative;
  display: flex;
  flex-direction: column;
  align-items: center;
}
.vscroll .up {
  margin-top: 8px;
  border-left: 5px solid transparent;
  border-right: 5px solid transparent;
  border-bottom: 6px solid #333;
}
.thumb {
  width: 8px;
  height: 178px;
  margin-top: 6px;
  border-radius: 4px;
  background: #333;
}
.vscroll .down {
  margin-top: auto;
  margin-bottom: 3px;
  border-left: 5px solid transparent;
  border-right: 5px solid transparent;
  border-top: 6px solid #333;
}

/* pestañas de hojas */
.tabbar {
  height: 30px;
  box-sizing: border-box;
  display: flex;
  align-items: flex-start;
  flex: none;
  border-bottom: 1px solid #fff;
  color: #111;
  background: #d9d9d9;
  position: relative;
}
.nav {
  width: 30px;
  padding-top: 9px;
  display: flex;
  justify-content: center;
}
.nav:first-child {
  margin-left: 12px;
}
.nav svg {
  width: 8px;
  height: 13px;
}
.tabs {
  margin-left: 34px;
  width: 1596px;
  display: flex;
  gap: 8px;
  flex: none;
  overflow: hidden;
}
.tab {
  flex: none;
  height: 23px;
  margin-top: 3px;
  box-sizing: border-box;
  border-radius: 3px;
  display: flex;
  align-items: center;
  justify-content: center;
  font-size: 13.5px;
  letter-spacing: -0.45px;
  white-space: nowrap;
  overflow: hidden;
  position: relative;
}
.white {
  background: #fff;
}
.yellow {
  background: #ffff99;
}
.purple {
  background: #2e0f5c;
  color: #c8b6e6;
  box-shadow: inset 0 0 0 1px #3d1f6e;
}
.plain {
  background: transparent;
}
.cut {
  justify-content: flex-start;
  padding-left: 9px;
  border-radius: 3px 0 0 3px;
}
.active {
  background: #fff;
  height: 26px;
  margin-top: 0;
  align-items: flex-start;
  padding-top: 3px;
  font-size: 13px;
  border-radius: 0 0 3px 3px;
}
.active::after {
  content: "";
  position: absolute;
  left: 7px;
  right: 7px;
  bottom: 3px;
  height: 2px;
  background: #0e5134;
}
.more {
  position: absolute;
  left: 1712px;
  top: 9px;
  font-size: 8px;
  font-weight: 700;
  letter-spacing: 0;
  width: 16px;
}
.plus {
  position: absolute;
  left: 1739px;
  top: -1px;
  font-size: 22px;
  line-height: 30px;
  font-weight: 300;
}
.kebab {
  position: absolute;
  left: 1770px;
  top: 3px;
  font-size: 16px;
  font-weight: 700;
}
.hscroll {
  position: absolute;
  left: 1796px;
  top: 9px;
  display: flex;
  align-items: center;
  gap: 6px;
}
.la {
  border-top: 5px solid transparent;
  border-bottom: 5px solid transparent;
  border-right: 6px solid #333;
}
.ra {
  border-top: 5px solid transparent;
  border-bottom: 5px solid transparent;
  border-left: 6px solid #333;
}
.hthumb {
  width: 78px;
  height: 10px;
  border-radius: 5px;
  background: #444;
}

/* barra de estado */
.statusbar {
  height: 20px;
  display: flex;
  align-items: center;
  padding: 0 13px 0 10px;
  font-size: 11px;
  color: #222;
  flex: none;
}
.ready {
  width: 46px;
  flex: none;
}
.macro {
  width: 15px;
  height: 15px;
}
.access {
  width: 16px;
  height: 16px;
  margin-left: 14px;
}
.inv {
  margin-left: 2px;
  font-weight: 700;
  flex: 1;
  white-space: nowrap;
}
.view {
  width: 38px;
  height: 20px;
  display: flex;
  align-items: center;
  justify-content: center;
  flex: none;
}
.view svg {
  width: 13px;
  height: 13px;
}
.view.act {
  background: #b8b8b8;
}
.zm {
  width: 12px;
  text-align: center;
  font-size: 13px;
  margin-left: 2px;
  flex: none;
}
.slider {
  width: 92px;
  height: 1px;
  background: #444;
  position: relative;
  margin-left: 4px;
  flex: none;
}
.slider i {
  position: absolute;
  left: 37px;
  top: -6px;
  width: 5px;
  height: 13px;
  background: #444;
}
.pct {
  margin-left: 8px;
  width: 21px;
  font-size: 10.5px;
  letter-spacing: 0;
  flex: none;
}

/* barra de tareas */
.taskbar {
  height: 45px;
  flex: none;
  position: relative;
  background: #98d0d0;
  display: flex;
  overflow: hidden;
}
.noise {
  position: absolute;
  left: 0;
  top: 0;
}
.weather {
  width: 560px;
  position: relative;
  display: flex;
  padding-left: 18px;
  flex: none;
}
.wicon {
  width: 24px;
  height: 24px;
  margin-top: 9px;
  position: relative;
  display: block;
}
.wicon svg {
  width: 24px;
  height: 22px;
  position: absolute;
  top: 3px;
  left: 0;
}
.wicon i {
  position: absolute;
  top: -3px;
  left: 11px;
  width: 15px;
  height: 15px;
  border-radius: 50%;
  background: #b8381c;
  color: #fff;
  font: 9px/15px "Noto Sans", sans-serif;
  text-align: center;
}
.wtext {
  margin-left: 6px;
  padding-top: 7px;
  display: flex;
  flex-direction: column;
  font-size: 12px;
  line-height: 15px;
}
.cloudy {
  color: #333;
}
.apps {
  position: relative;
  display: flex;
  align-items: center;
  padding: 0 0 3px 99px;
  gap: 17px;
  height: 45px;
  box-sizing: border-box;
}
.ap {
  width: 24px;
  height: 24px;
}
.run {
  position: relative;
  flex: none;
}
.run::after {
  content: "";
  position: absolute;
  left: 9px;
  bottom: -7px;
  width: 6px;
  height: 3px;
  border-radius: 2px;
  background: #5a5a5a;
}
.tsearch {
  width: 204px;
  height: 28px;
  margin: 0 -5px;
  border-radius: 14px;
  background: #d8fbff;
  display: flex;
  align-items: center;
  padding-left: 10px;
  gap: 9px;
  box-sizing: border-box;
  font-size: 13px;
  position: relative;
  flex: none;
}
.tsearch > svg:first-child {
  width: 15px;
  height: 15px;
}
.deco {
  position: absolute;
  right: 4px;
  top: 0;
  width: 44px;
  height: 28px;
}
.tray {
  position: absolute;
  right: 18px;
  top: 0;
  height: 45px;
  display: flex;
  align-items: center;
}
.trayic {
  width: 14px;
  height: 14px;
}
.trayic.up {
  width: 11px;
  height: 8px;
}
.trayic.net {
  margin-left: 19px;
  width: 16px;
  height: 16px;
}
.trayic.spk {
  margin-left: 6px;
  width: 15px;
  height: 15px;
}
.clock {
  margin-left: 21px;
  display: flex;
  flex-direction: column;
  align-items: flex-end;
  line-height: 15px;
  font-size: 11.5px;
}
</style>
